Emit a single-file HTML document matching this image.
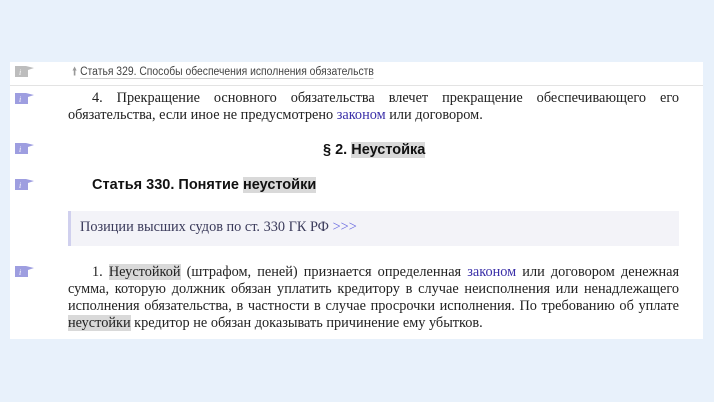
<!DOCTYPE html>
<html><head><meta charset="utf-8"><style>
body{margin:0;width:714px;height:402px;background:#e8f1fb;position:relative;overflow:hidden;font-family:"Liberation Serif",serif;color:#222}
.panel{position:absolute;left:10px;top:62px;width:693px;height:277px;background:#fff}
.ic{position:absolute;left:15px;width:20px;height:12px}
.t{position:absolute;left:68px;width:611px;font-size:14.3px;line-height:17px;text-align:justify;text-indent:24px}
a{color:#3a2fa8;text-decoration:none}
.hl{background:#d9d9d9}
.b{font-family:"Liberation Sans",sans-serif;font-weight:bold;font-size:14.5px;color:#111;position:absolute}
</style></head><body>
<div class="panel"></div>
<svg class="ic" style="top:66px" viewBox="0 0 20 12"><path d="M0 0H11L19 2L13 4V11H0Z" fill="#bdbdbd"/><text x="4" y="9" font-size="8" fill="#fff" font-style="italic" font-family="Liberation Serif">i</text></svg>
<svg class="ic" style="top:93px" viewBox="0 0 20 12"><path d="M0 0H11L19 2L13 4V11H0Z" fill="#9e9ee0"/><text x="4" y="9" font-size="8" fill="#fff" font-style="italic" font-family="Liberation Serif">i</text></svg>
<svg class="ic" style="top:143px" viewBox="0 0 20 12"><path d="M0 0H11L19 2L13 4V11H0Z" fill="#9e9ee0"/><text x="4" y="9" font-size="8" fill="#fff" font-style="italic" font-family="Liberation Serif">i</text></svg>
<svg class="ic" style="top:179px" viewBox="0 0 20 12"><path d="M0 0H11L19 2L13 4V11H0Z" fill="#9e9ee0"/><text x="4" y="9" font-size="8" fill="#fff" font-style="italic" font-family="Liberation Serif">i</text></svg>
<svg class="ic" style="top:266px" viewBox="0 0 20 12"><path d="M0 0H11L19 2L13 4V11H0Z" fill="#9e9ee0"/><text x="4" y="9" font-size="8" fill="#fff" font-style="italic" font-family="Liberation Serif">i</text></svg>
<div style="position:absolute;left:72px;top:64px;font-family:'Liberation Sans',sans-serif;font-size:11.5px;color:#444;line-height:16px;transform:scaleX(0.9);transform-origin:0 0;white-space:nowrap"><span style="color:#999">&#129049;</span> <span style="border-bottom:1px solid #ccc">Статья 329. Способы обеспечения исполнения обязательств</span></div>
<div style="position:absolute;left:10px;top:85px;width:693px;height:1px;background:#e3e3e3"></div>
<div class="t" style="top:90px">4. Прекращение основного обязательства влечет прекращение обеспечивающего его обязательства, если иное не предусмотрено <a>законом</a> или договором.</div>
<div class="b" style="left:323px;top:142px">§ 2. <span class="hl">Неустойка</span></div>
<div class="b" style="left:92px;top:177px">Статья 330. Понятие <span class="hl">неустойки</span></div>
<div style="position:absolute;left:68px;top:211px;width:611px;height:35px;background:#f3f3f8;border-left:3px solid #d0d0ee;box-sizing:border-box"></div>
<div style="position:absolute;left:80px;top:219px;font-size:14.3px;color:#3a3a5a">Позиции высших судов по ст. 330 ГК РФ <a style="color:#6a6ae0">&gt;&gt;&gt;</a></div>
<div class="t" style="top:264px">1. <span class="hl">Неустойкой</span> (штрафом, пеней) признается определенная <a>законом</a> или договором денежная сумма, которую должник обязан уплатить кредитору в случае неисполнения или ненадлежащего исполнения обязательства, в частности в случае просрочки исполнения. По требованию об уплате <span class="hl">неустойки</span> кредитор не обязан доказывать причинение ему убытков.</div>
</body></html>
